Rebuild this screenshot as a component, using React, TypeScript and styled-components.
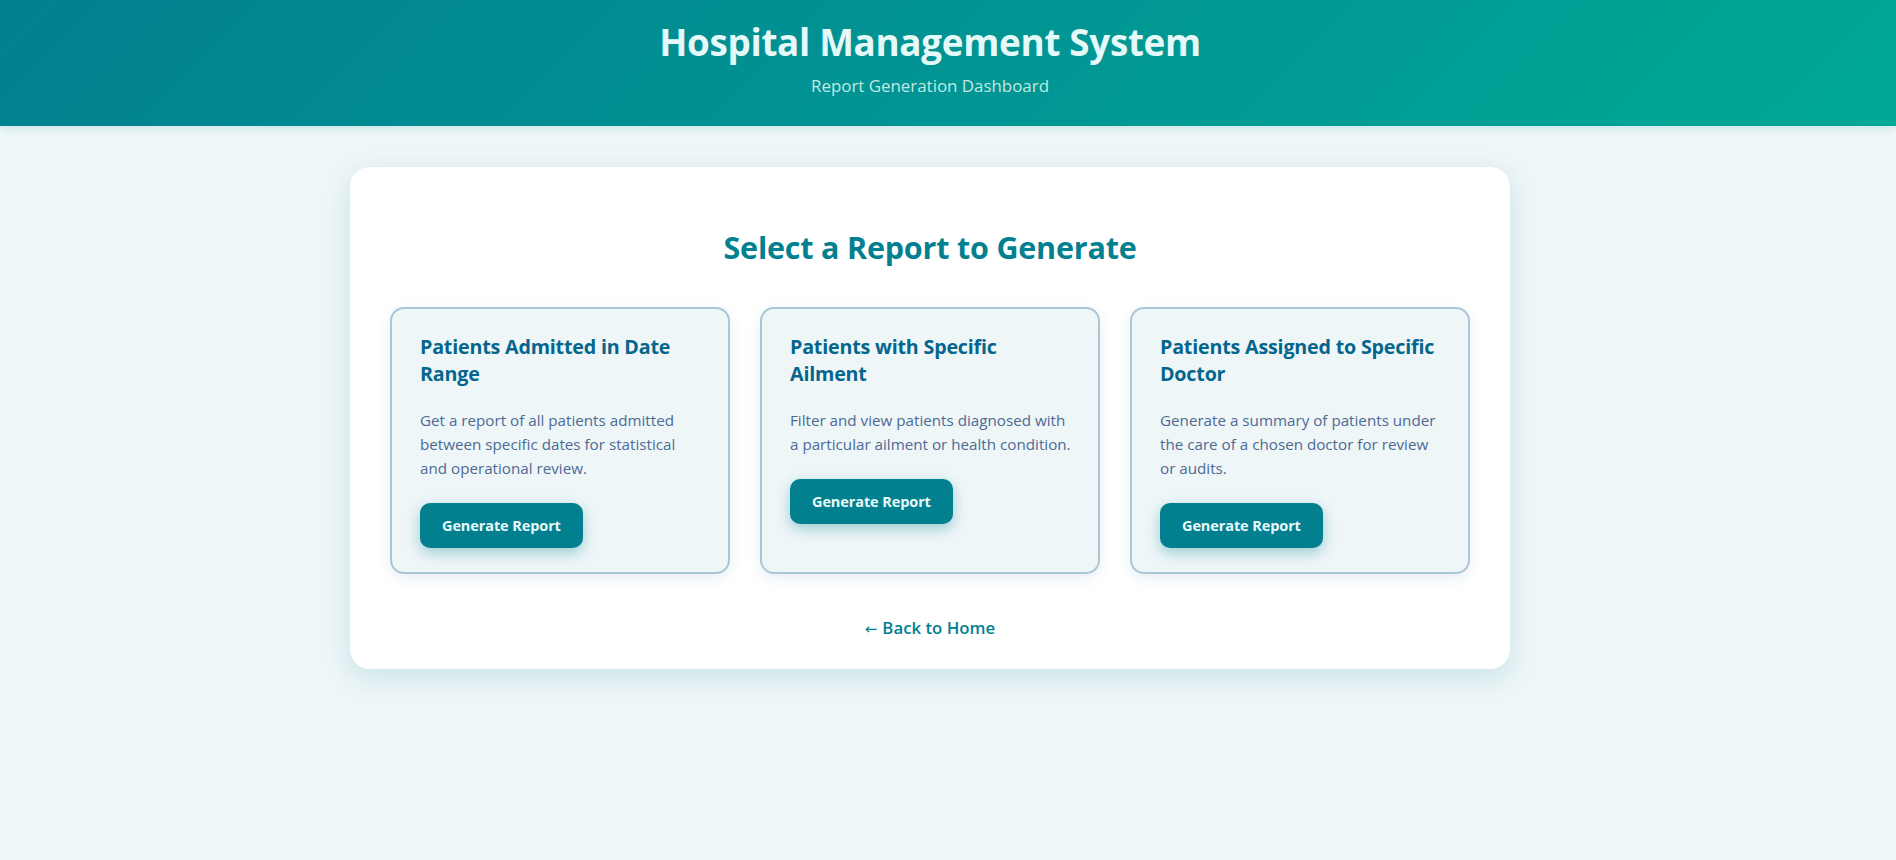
import React from "react";
import styled, { createGlobalStyle } from "styled-components";

const GlobalStyle = createGlobalStyle`
  html, body { margin: 0; padding: 0; }
  body {
    background: #eef6f8;
    font-family: "Open Sans", "Noto Sans", Arial, sans-serif;
  }
  * { box-sizing: border-box; }
`;

const Page = styled.div`
  min-height: calc(100vh + 24px);
  display: flex;
  flex-direction: column;
`;

const Header = styled.header`
  background: linear-gradient(135deg, #028090 0%, #00a896 100%);
  padding: 18px 36px 28px 0;
  text-align: center;
  box-shadow: 0 2px 8px rgba(2, 128, 144, 0.15);
`;

const Title = styled.h1`
  margin: 0;
  font-size: 36.8px;
  line-height: 48px;
  font-weight: 700;
  color: #e6f9f9;
  letter-spacing: -0.3px;
`;

const Subtitle = styled.p`
  margin: 8px 0 0;
  font-size: 16.9px;
  line-height: 24px;
  font-weight: 500;
  color: #c0e9e3;
`;

const Main = styled.main`
  display: flex;
  justify-content: center;
  padding: 41px 36px 40px 0;
`;

const Panel = styled.section`
  width: 1160px;
  background: #ffffff;
  border-radius: 20px;
  padding: 60px 40px 29px;
  box-shadow: 0 8px 28px rgba(2, 128, 144, 0.16);
  display: flex;
  flex-direction: column;
  align-items: center;
`;

const Heading = styled.h2`
  margin: 0 0 40px;
  font-size: 30.5px;
  line-height: 40px;
  font-weight: 700;
  color: #028090;
  letter-spacing: -0.2px;
`;

const CardGrid = styled.div`
  width: 100%;
  display: grid;
  grid-template-columns: repeat(3, 1fr);
  gap: 30px;
`;

const Card = styled.article`
  background: #eef6f8;
  border: 2px solid #abc7d7;
  border-radius: 14px;
  padding: 24px 27px 24px 28px;
  box-shadow: 0 4px 14px rgba(5, 102, 141, 0.1);
  display: flex;
  flex-direction: column;
  align-items: flex-start;
`;

const CardTitle = styled.h3`
  margin: 0 0 21px;
  font-size: 19.7px;
  line-height: 27px;
  font-weight: 700;
  color: #05668d;
  letter-spacing: -0.2px;
`;

const CardText = styled.p`
  margin: 0 0 23px;
  font-size: 15.2px;
  line-height: 24px;
  color: #4d6a94;
`;

const GenerateButton = styled.button`
  border: none;
  border-radius: 10px;
  background: #028090;
  color: #e8fafa;
  font-family: inherit;
  font-size: 14.5px;
  font-weight: 700;
  line-height: 21px;
  padding: 12px 22px;
  cursor: pointer;
  box-shadow: 0 5px 14px rgba(2, 128, 144, 0.35);
  letter-spacing: -0.1px;
`;

const BackLink = styled.a`
  margin-top: 43px;
  font-size: 16.8px;
  line-height: 22px;
  font-weight: 600;
  color: #028090;
  text-decoration: none;
  cursor: pointer;
  display: inline-flex;
  align-items: baseline;
  gap: 5px;
`;

const Arrow = styled.span`
  font-family: "DejaVu Sans", sans-serif;
  font-weight: 400;
  font-size: 15px;
`;

const reports = [
  {
    title: "Patients Admitted in Date Range",
    text: "Get a report of all patients admitted between specific dates for statistical and operational review.",
  },
  {
    title: "Patients with Specific Ailment",
    text: "Filter and view patients diagnosed with a particular ailment or health condition.",
  },
  {
    title: "Patients Assigned to Specific Doctor",
    text: "Generate a summary of patients under the care of a chosen doctor for review or audits.",
  },
];

export default function App() {
  return (
    <>
      <GlobalStyle />
      <Page>
        <Header>
          <Title>Hospital Management System</Title>
          <Subtitle>Report Generation Dashboard</Subtitle>
        </Header>
        <Main>
          <Panel>
            <Heading>Select a Report to Generate</Heading>
            <CardGrid>
              {reports.map((r) => (
                <Card key={r.title}>
                  <CardTitle>{r.title}</CardTitle>
                  <CardText>{r.text}</CardText>
                  <GenerateButton>Generate Report</GenerateButton>
                </Card>
              ))}
            </CardGrid>
            <BackLink href="#">
              <Arrow>←</Arrow>
              <span>Back to Home</span>
            </BackLink>
          </Panel>
        </Main>
      </Page>
    </>
  );
}
